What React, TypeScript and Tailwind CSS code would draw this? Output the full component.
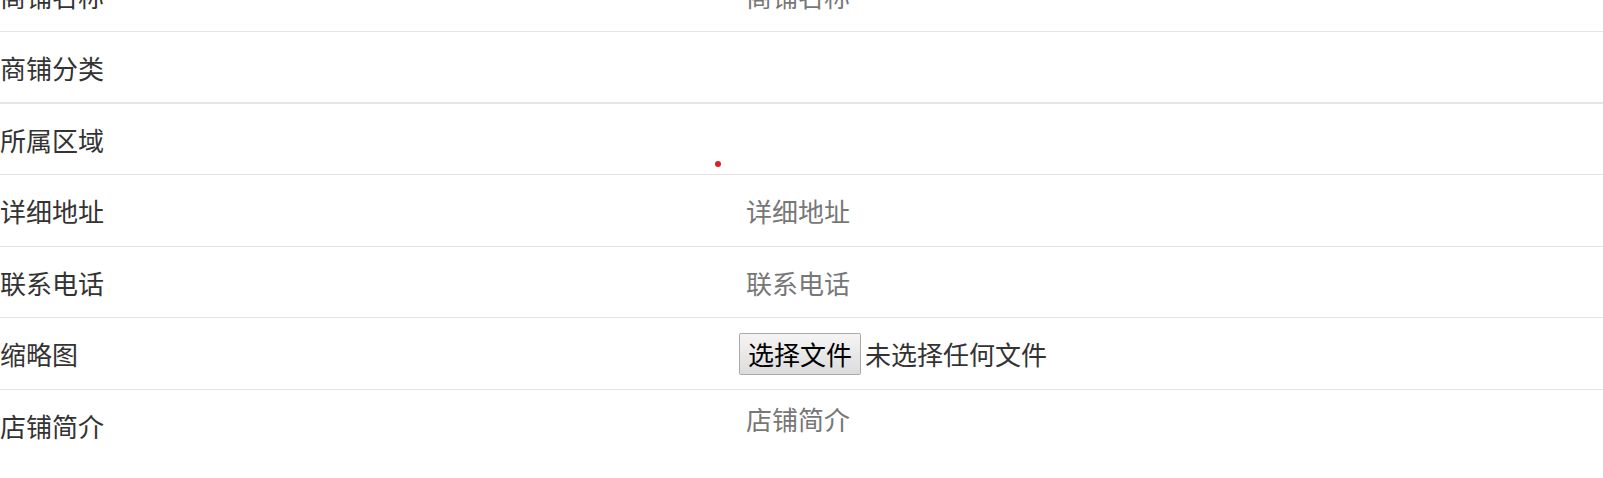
import React from "react";

type Field = {
  label: string;
  kind: "input" | "empty" | "file" | "textarea";
  placeholder?: string;
  rowClass: string;
};

const fields: Field[] = [
  { label: "商铺名称", kind: "input", placeholder: "商铺名称", rowClass: "h-[72px] border-b" },
  { label: "商铺分类", kind: "empty", rowClass: "h-[72px] border-b-2" },
  { label: "所属区域", kind: "empty", rowClass: "h-[71px] border-b" },
  { label: "详细地址", kind: "input", placeholder: "详细地址", rowClass: "h-[72px] border-b" },
  { label: "联系电话", kind: "input", placeholder: "联系电话", rowClass: "h-[71px] border-b" },
  { label: "缩略图", kind: "file", rowClass: "h-[72px] border-b" },
  { label: "店铺简介", kind: "textarea", placeholder: "店铺简介", rowClass: "h-[100px]" },
];

function FileInput() {
  return (
    <div className="flex items-center gap-[4px]">
      <button
        type="button"
        className="h-[42px] px-[8px] border border-[#a9a9a9] rounded-[2px] bg-gradient-to-b from-[#f5f5f5] to-[#dcdcdc] text-black text-[26px] leading-none"
      >
        选择文件
      </button>
      <span className="text-[#333]">未选择任何文件</span>
    </div>
  );
}

export default function App() {
  return (
    <div
      className="w-[1603px] h-[478px] overflow-hidden bg-white text-[26px] text-[#333]"
      style={{ fontFamily: '"Noto Sans CJK SC", "Noto Sans", sans-serif' }}
    >
      <form className="-mt-[40px] flex flex-col">
        {fields.map((f, i) => (
          <div
            key={f.label}
            className={`relative flex border-[#e5e5e5] ${f.rowClass} ${f.kind === "textarea" ? "items-start" : "items-center"}`}
          >
            <label className={`w-[739px] shrink-0 ${f.kind === "textarea" ? "pt-[16px]" : ""}`}>{f.label}</label>
            <div className="flex-1 h-full flex items-center">
              {f.kind === "input" && (
                <input
                  className="w-full pl-[7px] bg-transparent outline-none placeholder:text-[#777]"
                  placeholder={f.placeholder}
                />
              )}
              {f.kind === "file" && <FileInput />}
              {f.kind === "textarea" && (
                <textarea
                  className="w-full h-full pl-[7px] pt-[9px] resize-none bg-transparent outline-none placeholder:text-[#777]"
                  placeholder={f.placeholder}
                />
              )}
            </div>
            {i === 2 && (
              <span className="absolute left-[715px] top-[57px] w-[6px] h-[6px] rounded-full bg-[#dd1f26]" />
            )}
          </div>
        ))}
      </form>
    </div>
  );
}
